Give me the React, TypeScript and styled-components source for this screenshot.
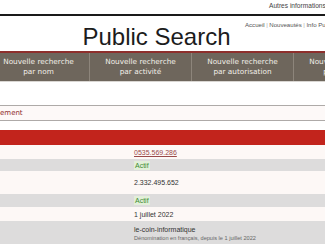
import React from "react";
import styled, { createGlobalStyle } from "styled-components";

const GlobalStyle = createGlobalStyle`
  html, body {
    margin: 0;
    padding: 0;
    background: #ffffff;
    overflow: hidden;
  }
`;

const Page = styled.div`
  width: 420px;
  margin-left: -12px;
  font-family: "Liberation Sans", Arial, sans-serif;
`;

const TopBar = styled.div`
  height: 14px;
  padding-left: 281px;
  font-size: 6.6px;
  line-height: 11px;
  color: #444;
  white-space: nowrap;
  overflow: hidden;
  border-bottom: 2px solid #1a1a1a;
`;

const Header = styled.div`
  height: 37px;
  padding-top: 5px;
  box-sizing: border-box;
  border-bottom: 2px solid #8e2f2c;
`;

const Links = styled.div`
  padding-left: 257px;
  font-size: 6.1px;
  line-height: 8px;
  color: #555;
  white-space: nowrap;
  overflow: hidden;
`;

const Sep = styled.span`
  color: #aaa;
  padding: 0 1.5px;
`;

const Title = styled.h1`
  width: 337px;
  margin: -2px 0 0;
  text-align: center;
  font-weight: normal;
  font-size: 24px;
  line-height: 20px;
  color: #1c1c1c;
`;

const Nav = styled.div`
  display: grid;
  grid-template-columns: repeat(4, 102px);
  height: 28px;
  background: #6e665c;
  border-bottom: 1px solid #d9d6d2;
`;

const NavItem = styled.div`
  display: flex;
  align-items: center;
  justify-content: center;
  text-align: center;
  border-right: 1px solid #8d857b;
  font-family: "DejaVu Sans", Verdana, sans-serif;
  font-size: 7.3px;
  line-height: 10px;
  color: #f2eee8;
`;

const SectionHeader = styled.div`
  margin-top: 23px;
  height: 14px;
  display: flex;
  align-items: center;
  padding-left: 12px;
  background: #fdf9f8;
  border-top: 1px solid #aeaaa8;
  border-bottom: 1px solid #aeaaa8;
  font-family: "DejaVu Sans", Verdana, sans-serif;
  font-size: 7px;
  color: #8e2c2c;
`;

const RedBar = styled.div`
  margin-top: 9px;
  height: 15px;
  background: #c2241c;
`;

const Row = styled.div<{ $grey?: boolean; $h: number }>`
  display: grid;
  grid-template-columns: 146px 1fr;
  min-height: ${(p) => p.$h}px;
  background: ${(p) => (p.$grey ? "#dddcdc" : "#fdf8f6")};
`;

const Value = styled.div`
  display: flex;
  flex-direction: column;
  justify-content: center;
  font-size: 7px;
  line-height: 9px;
  color: #333;
`;

const Phone = styled.span`
  color: #9a4a4a;
  text-decoration: underline;
`;

const Status = styled.span`
  align-self: flex-start;
  color: #3c8c31;
  background: #e2efd9;
  padding: 0 1px;
`;

const Note = styled.span`
  font-size: 5.6px;
  line-height: 8px;
  color: #666;
`;

const navItems = [
  ["Nouvelle recherche", "par nom"],
  ["Nouvelle recherche", "par activité"],
  ["Nouvelle recherche", "par autorisation"],
  ["Nouvelle recherche", "par numéro"],
];

export default function App() {
  return (
    <>
      <GlobalStyle />
      <Page>
        <TopBar>Autres informations légales</TopBar>
        <Header>
          <Links>
            Accueil<Sep>|</Sep>Nouveautés<Sep>|</Sep>Info Publications
          </Links>
          <Title>Public Search</Title>
        </Header>
        <Nav>
          {navItems.map(([a, b]) => (
            <NavItem key={b}>
              {a}
              <br />
              {b}
            </NavItem>
          ))}
        </Nav>
        <SectionHeader>ement</SectionHeader>
        <RedBar />
        <Row $h={14}>
          <div />
          <Value>
            <span>
              <Phone>0535.569.286</Phone>
            </span>
          </Value>
        </Row>
        <Row $grey $h={12}>
          <div />
          <Value>
            <Status>Actif</Status>
          </Value>
        </Row>
        <Row $h={23}>
          <div />
          <Value>2.332.495.652</Value>
        </Row>
        <Row $grey $h={13}>
          <div />
          <Value>
            <Status>Actif</Status>
          </Value>
        </Row>
        <Row $h={14}>
          <div />
          <Value>1 juillet 2022</Value>
        </Row>
        <Row $grey $h={24}>
          <div />
          <Value>
            <span>le-coin-informatique</span>
            <Note>Dénomination en français, depuis le 1 juillet 2022</Note>
          </Value>
        </Row>
      </Page>
    </>
  );
}
